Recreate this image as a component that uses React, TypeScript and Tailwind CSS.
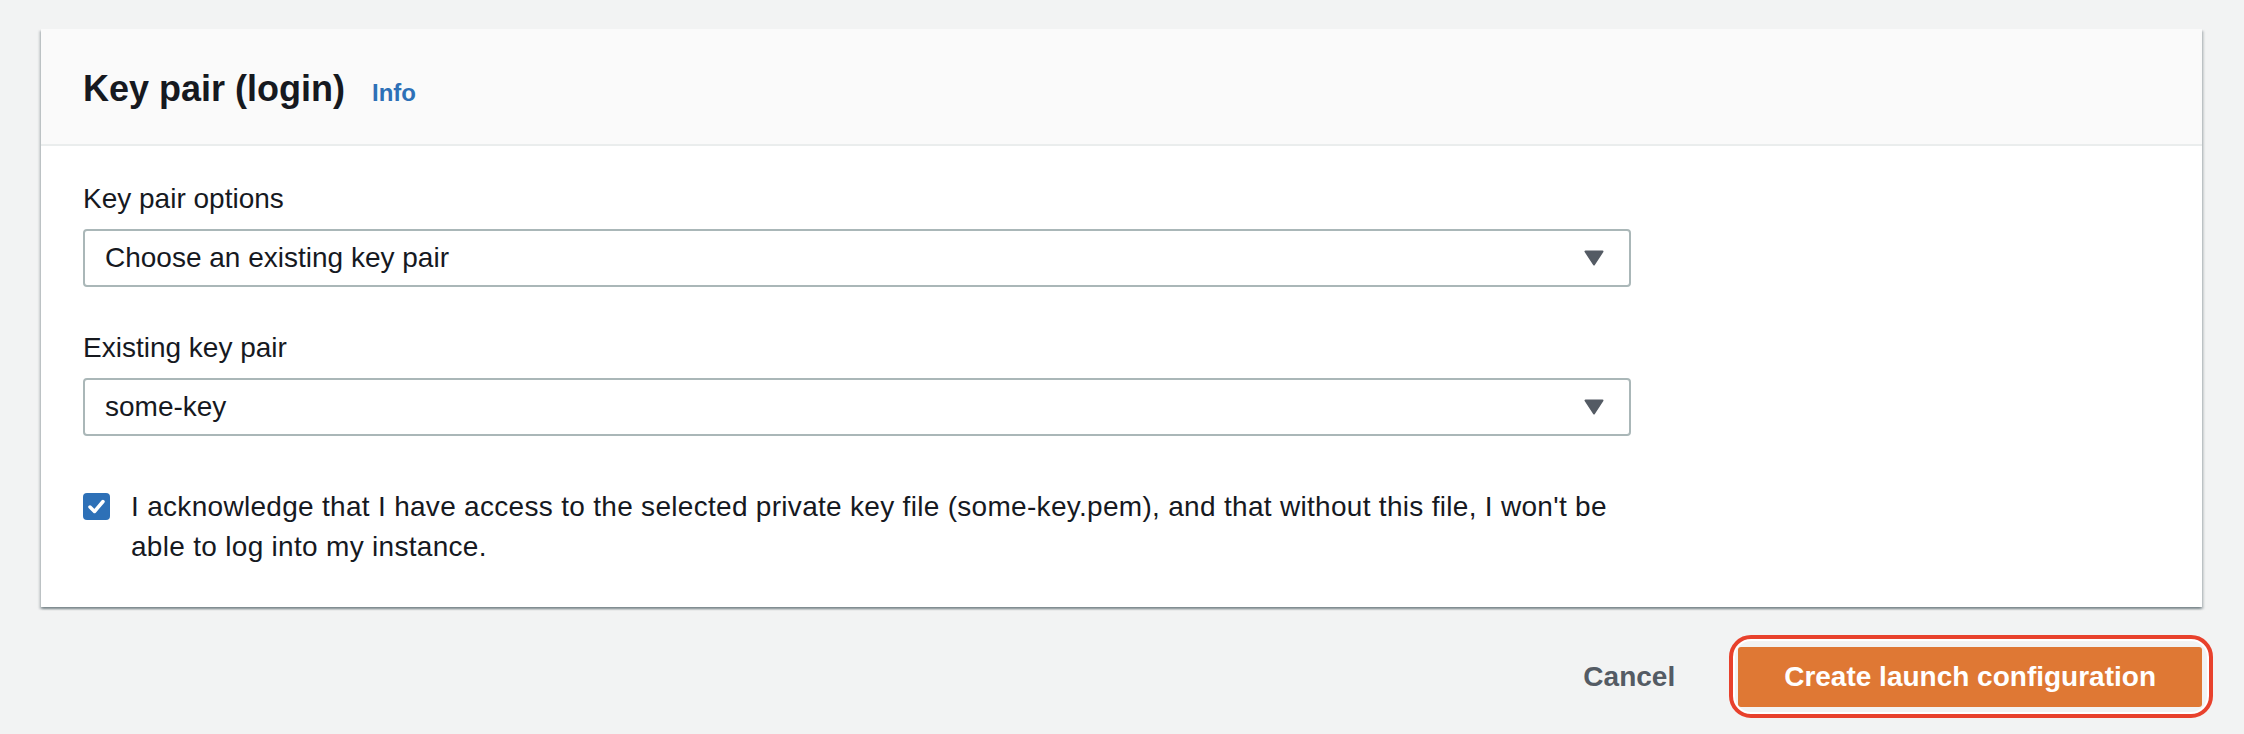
const shadowCard =
  "shadow-[0_2px_2px_0_rgba(0,28,36,0.3),2px_2px_2px_0_rgba(0,28,36,0.15),-2px_2px_2px_0_rgba(0,28,36,0.15)]";

function Caret() {
  return (
    <svg width="20" height="16" viewBox="0 0 20 16" aria-hidden="true">
      <path d="M1.5 1.5 H18.5 L10 14.5 Z" fill="#545b64" stroke="#545b64" strokeWidth="2" strokeLinejoin="round" />
    </svg>
  );
}

function Select({ value }: { value: string }) {
  return (
    <div className="mt-[10px] flex h-[58px] w-[1548px] items-center justify-between rounded-[4px] border-2 border-[#aab7b8] bg-white pl-[20px] pr-[25px]">
      <span className="text-[28px] leading-[40px]">{value}</span>
      <Caret />
    </div>
  );
}

export default function App() {
  return (
    <div className="min-h-screen bg-[#f2f3f3] pl-[41px] pr-[42px] pt-[29px] font-['Liberation_Sans',Arial,sans-serif] text-[#16191f]">
      <section className={`bg-white ${shadowCard}`}>
        <header className="flex items-baseline border-b-2 border-[#eaeded] bg-[#fafafa] px-[42px] pb-[33px] pt-[38px]">
          <h2 className="text-[36px] font-bold leading-[44px]">Key pair (login)</h2>
          <a className="ml-[27px] text-[24px] font-bold text-[#2d70b7]">Info</a>
        </header>

        <div className="px-[42px] pb-[40px] pt-[33px]">
          <div className="text-[28px] leading-[40px]">Key pair options</div>
          <Select value="Choose an existing key pair" />

          <div className="mt-[41px] text-[28px] leading-[40px]">Existing key pair</div>
          <Select value="some-key" />

          <label className="mt-[51px] flex items-start">
            <span className="mt-[6px] flex h-[27px] w-[27px] shrink-0 items-center justify-center rounded-[4px] bg-[#2d70b7]">
              <svg width="27" height="27" viewBox="0 0 27 27" aria-hidden="true">
                <path d="M7 14 L11.5 18.5 L20 8.5" fill="none" stroke="white" strokeWidth="3.5" strokeLinecap="round" strokeLinejoin="round" />
              </svg>
            </span>
            <span className="ml-[21px] text-[28px] leading-[40px] tracking-[0.3px]">
              I acknowledge that I have access to the selected private key file (some-key.pem), and that without this file, I won't be
              <br />
              able to log into my instance.
            </span>
          </label>
        </div>
      </section>

      <div className="mt-[40px] flex items-center justify-end gap-[63px]">
        <button className="text-[28px] font-bold leading-[40px] text-[#545b64]">Cancel</button>
        <div className="relative">
          <span className="pointer-events-none absolute -bottom-[11px] -left-[9px] -right-[11px] -top-[12px] rounded-[22px] border-4 border-[#e8412c] shadow-[inset_0_0_0_2px_white]" />
          <button className="h-[60px] rounded-[3px] bg-[#df7834] px-[46px] text-[28px] font-bold leading-[40px] text-white">
            Create launch configuration
          </button>
        </div>
      </div>
    </div>
  );
}
